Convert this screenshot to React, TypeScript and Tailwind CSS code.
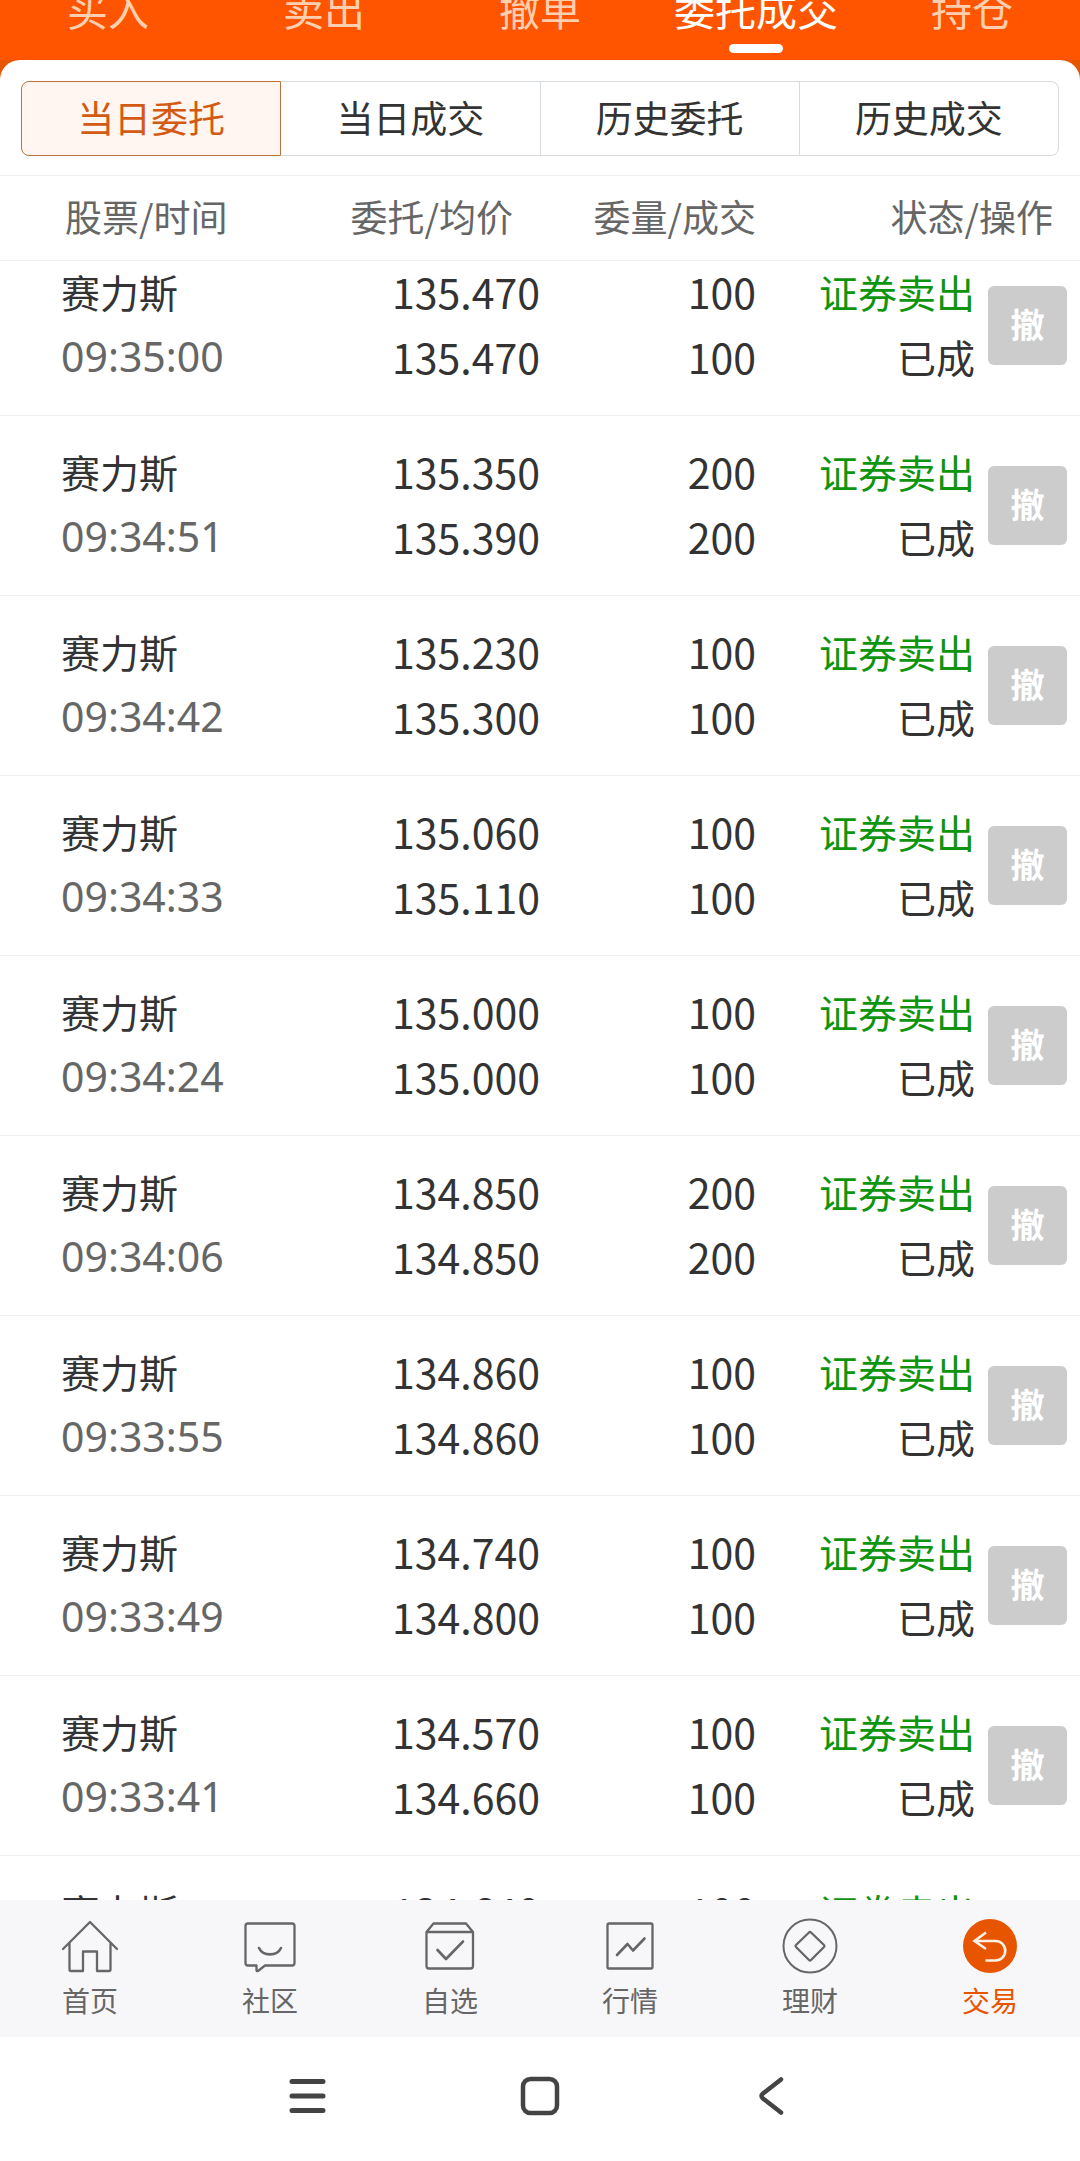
import { useLayoutEffect, useRef } from "react";
import type { ReactNode } from "react";

const TABS = ["买入", "卖出", "撤单", "委托成交", "持仓"];
const ACTIVE_TAB = "委托成交";

const SEGMENTS = ["当日委托", "当日成交", "历史委托", "历史成交"];

type Order = { time: string; price: string; avg: string; qty: number };

const ORDERS: Order[] = [
  { time: "09:35:00", price: "135.470", avg: "135.470", qty: 100 },
  { time: "09:34:51", price: "135.350", avg: "135.390", qty: 200 },
  { time: "09:34:42", price: "135.230", avg: "135.300", qty: 100 },
  { time: "09:34:33", price: "135.060", avg: "135.110", qty: 100 },
  { time: "09:34:24", price: "135.000", avg: "135.000", qty: 100 },
  { time: "09:34:06", price: "134.850", avg: "134.850", qty: 200 },
  { time: "09:33:55", price: "134.860", avg: "134.860", qty: 100 },
  { time: "09:33:49", price: "134.740", avg: "134.800", qty: 100 },
  { time: "09:33:41", price: "134.570", avg: "134.660", qty: 100 },
  { time: "09:33:32", price: "134.640", avg: "134.640", qty: 100 },
];

function TopTabs() {
  return (
    <nav className="flex h-[60px] shrink-0 overflow-hidden bg-[#ff5500]">
      {TABS.map((t) => (
        <button
          key={t}
          className={`flex flex-1 flex-col items-center justify-end pb-[7px] text-[41px] leading-[60px] whitespace-nowrap ${
            t === ACTIVE_TAB ? "text-white" : "text-[#ffcfb0]"
          }`}
        >
          {t}
          <span className={`mt-1.5 h-[9px] w-[54px] shrink-0 rounded-full ${t === ACTIVE_TAB ? "bg-white" : ""}`} />
        </button>
      ))}
    </nav>
  );
}

function Segments() {
  return (
    <div className="flex px-[21px] pt-[21px] pb-[19px]">
      {SEGMENTS.map((s, i) => (
        <button
          key={s}
          className={`h-[75px] flex-1 border pb-0.5 text-[37px] leading-none first:rounded-l-lg last:rounded-r-lg ${
            i === 0
              ? "border-[#c4703c] bg-[#fff5f1] text-[#d35a12]"
              : "border-l-0 border-[#d9dcdf] text-[#333333]"
          }`}
        >
          {s}
        </button>
      ))}
    </div>
  );
}

function OrderRow({ order }: { order: Order }) {
  const cell = "border-b border-[#f1f1f1] pt-[23px] pb-[26px] leading-[65px]";
  return (
    <tr>
      <td className={`${cell} pl-[61px] text-[39px]`}>
        <div>赛力斯</div>
        <div className="font-['Noto_Sans'] text-[41px] text-[#666666]">{order.time}</div>
      </td>
      <td className={`${cell} text-right text-[41px]`}>
        <div>{order.price}</div>
        <div>{order.avg}</div>
      </td>
      <td className={`${cell} text-right text-[41px]`}>
        <div>{order.qty}</div>
        <div>{order.qty}</div>
      </td>
      <td className={`${cell} text-right text-[39px] whitespace-nowrap`}>
        <div className="text-[#0f9410]">证券卖出</div>
        <div>已成</div>
      </td>
      <td className={`${cell} pl-[13px]`}>
        <button className="mt-0.5 block size-[79px] rounded-md bg-[#cccccc] pb-0.5 text-[34px] leading-none font-bold text-white">
          撤
        </button>
      </td>
    </tr>
  );
}

function OrderList() {
  const ref = useRef<HTMLDivElement>(null);

  useLayoutEffect(() => {
    if (ref.current) ref.current.scrollTop = 25;
  }, []);

  const head = "sticky top-0 z-10 h-[86px] border-y border-[#f1f1f1] bg-white pb-0.5 font-normal";
  return (
    <div ref={ref} className="min-h-0 flex-1 overflow-y-auto [scrollbar-width:none]">
      <table className="w-full table-fixed border-separate border-spacing-0 text-[#333333]">
        <colgroup>
          <col className="w-[28%]" />
          <col className="w-[22%]" />
          <col className="w-[20%]" />
          <col />
          <col className="w-[105px]" />
        </colgroup>
        <thead className="text-[37px] text-[#666666]">
          <tr>
            <th className={`${head} pl-[65px] text-left`}>股票/时间</th>
            <th className={`${head} pr-[27px] text-right`}>委托/均价</th>
            <th className={`${head} text-right`}>委量/成交</th>
            <th className={`${head} pr-[27px] text-right`} colSpan={2}>
              状态/操作
            </th>
          </tr>
        </thead>
        <tbody>
          {ORDERS.map((o) => (
            <OrderRow key={o.time} order={o} />
          ))}
        </tbody>
      </table>
    </div>
  );
}

function Icon({ children }: { children: ReactNode }) {
  return (
    <svg
      viewBox="0 0 56 56"
      className="size-14"
      fill="none"
      stroke="currentColor"
      strokeWidth="2.3"
      strokeLinecap="round"
      strokeLinejoin="round"
    >
      {children}
    </svg>
  );
}

const NAV = [
  {
    label: "首页",
    icon: <path d="M1 31 28 4l27 27M7.5 25.5V51.5q0 1.5 1.5 1.5H21V33.500h14V53h12q1.500 0 1.500-1.500V25.500" />,
  },
  {
    label: "社区",
    icon: (
      <>
        <path d="M6 5.500H50q2.500 0 2.500 2.500V45q0 2.500-2.500 2.500H23L16 53q-1.500.5-1.500-1V47.500H6q-2.500 0-2.500-2.500V8q0-2.500 2.500-2.500Z" />
        <path d="M17 30c4 8.500 18 8.500 22 0" strokeWidth="2.6" />
      </>
    ),
  },
  {
    label: "自选",
    icon: (
      <>
        <path d="M4.500 14 11.500 5.500H44L51 14M4.500 14H51V48q0 2.500-2.500 2.500H7q-2.500 0-2.500-2.500Z" />
        <path d="M15.500 32 24 41 41 23.500" strokeWidth="2.6" />
      </>
    ),
  },
  {
    label: "行情",
    icon: (
      <>
        <rect x="5.5" y="5.5" width="45" height="45" rx="1.5" />
        <path d="M15 37 25.500 26l5.500 6.500L42.500 20.500" strokeWidth="2.6" />
      </>
    ),
  },
  {
    label: "理财",
    icon: (
      <>
        <circle cx="28" cy="28" r="26.5" strokeWidth="2" />
        <path d="M27 14.500q1-1 2 0L42 27q1 1 0 2L29 42q-1 1-2 0L14 29q-1-1 0-2Z" />
      </>
    ),
  },
  {
    label: "交易",
    active: true,
    icon: (
      <>
        <circle cx="28" cy="28" r="27" fill="currentColor" stroke="none" />
        <path
          d="M24 14.500 12.500 23 24 31M13 23H33.500a9.500 9.500 0 0 1 0 19.500H23.500"
          stroke="#fff0e6"
          strokeWidth="2.6"
          strokeLinecap="butt"
          strokeLinejoin="miter"
        />
      </>
    ),
  },
];

function BottomNav() {
  return (
    <nav className="flex h-[137px] shrink-0 bg-[#f7f7fa]">
      {NAV.map((n) => (
        <a
          key={n.label}
          href="#"
          className={`flex flex-1 flex-col items-center pt-[18px] text-[28px] leading-[52px] ${
            n.active ? "text-[#e85500]" : "text-[#666666]"
          }`}
        >
          <Icon>{n.icon}</Icon>
          <span>{n.label}</span>
        </a>
      ))}
    </nav>
  );
}

function SystemBar() {
  const svg = "size-10";
  return (
    <div className="flex h-[124px] shrink-0 items-center justify-center gap-48 bg-white pb-1.5 text-[#444444]">
      <button aria-label="菜单">
        <svg viewBox="0 0 40 40" className={svg} stroke="currentColor" strokeWidth="5" strokeLinecap="round">
          <path d="M4 5.500h31M4 20h31M4 34.500h31" />
        </svg>
      </button>
      <button aria-label="主页">
        <svg viewBox="0 0 40 40" className={svg} fill="none" stroke="currentColor" strokeWidth="4.5">
          <rect x="3" y="3" width="34" height="34" rx="7.5" />
        </svg>
      </button>
      <button aria-label="返回">
        <svg
          viewBox="0 0 40 40"
          className={svg}
          fill="none"
          stroke="currentColor"
          strokeWidth="4.5"
          strokeLinecap="round"
          strokeLinejoin="round"
        >
          <path d="M29 3.500 11 17.500q-3 2.500 0 5L29 36.500" />
        </svg>
      </button>
    </div>
  );
}

export default function App() {
  return (
    <div
      lang="zh-CN"
      className="flex h-screen w-full flex-col overflow-hidden bg-white font-['Noto_Sans_CJK_SC',sans-serif]"
    >
      <TopTabs />
      <div className="shrink-0 bg-[#e85500]">
        <div className="rounded-t-[20px] bg-white">
          <Segments />
        </div>
      </div>
      <OrderList />
      <BottomNav />
      <SystemBar />
    </div>
  );
}
